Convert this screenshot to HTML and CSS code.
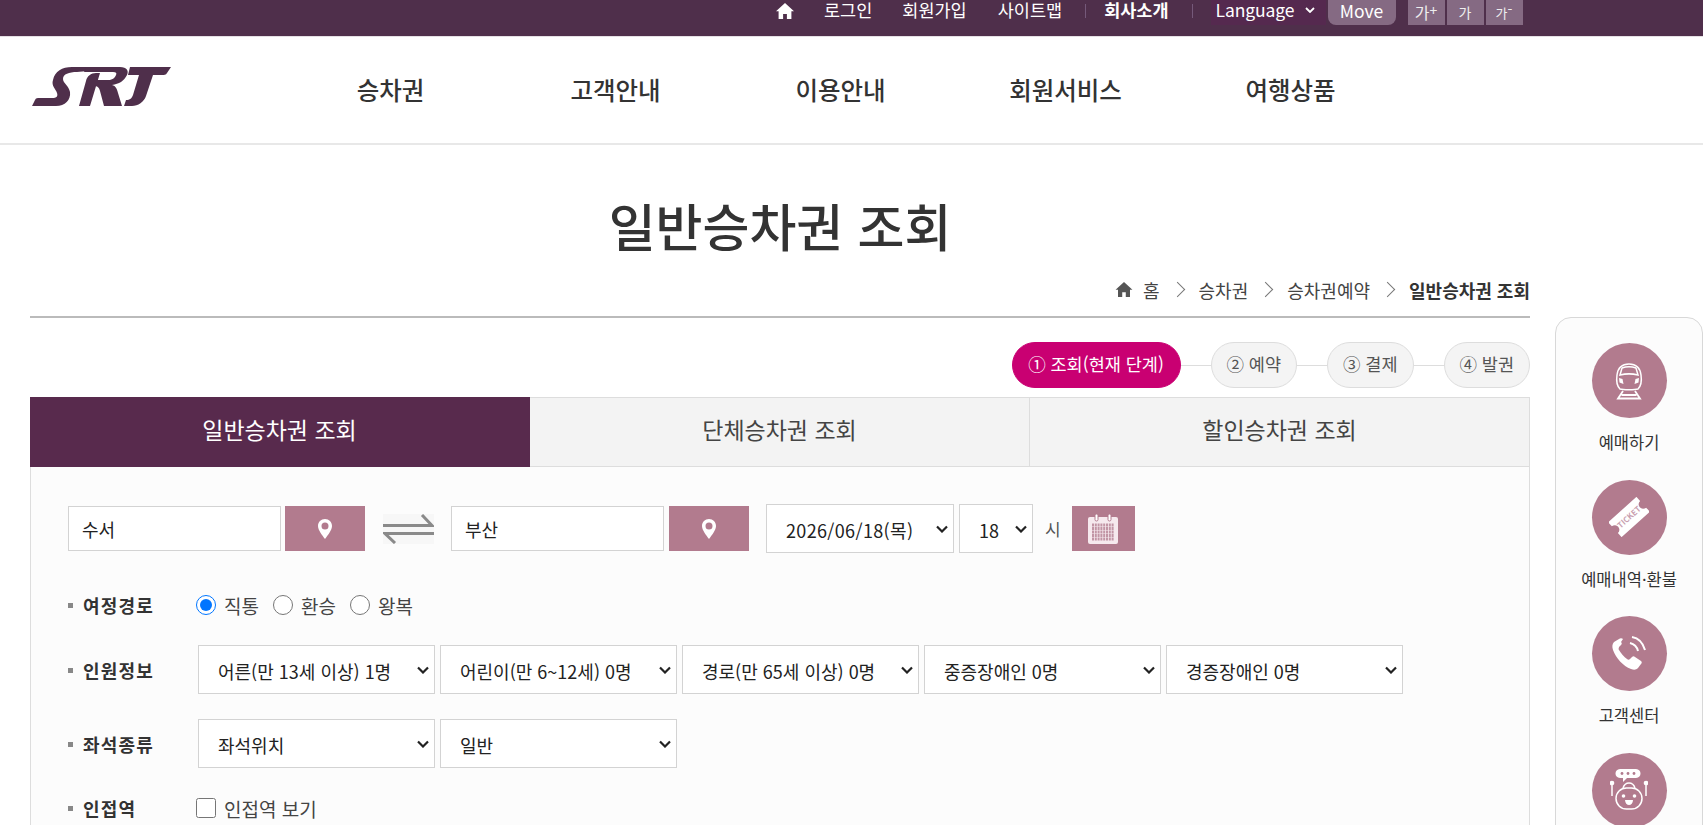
FILE: index.html
```html
<!doctype html>
<html lang="ko">
 <head>
  <meta charset="UTF-8">
  <meta name="viewport" content="width=device-width, initial-scale=1.0">
  <title>일반승차권 조회 | SRT</title>
  <link rel="stylesheet" href="styles.css">
 </head>
 <body>
  <div class="top-bar">
   <svg class="top-home" viewBox="0 0 18 16" width="18" height="16"><path fill="#fff" d="M9 0 18 8.2h-2.6V16h-4.500v-5H7.100v5H2.600V8.200H0z"/></svg>
   <a class="top-link login">로그인</a>
   <a class="top-link join">회원가입</a>
   <a class="top-link sitemap">사이트맵</a>
   <span class="top-sep"></span>
   <a class="top-link company">회사소개</a>
   <span class="top-sep sep-2"></span>
   <div class="lang">Language
    <svg viewBox="0 0 10 6" width="10" height="6"><path fill="none" stroke="#fff" stroke-width="1.800" d="M1 1l4 4 4-4"/></svg>
   </div>
   <a class="move-btn">Move</a>
   <div class="font-btns">
    <a class="font-btn">가<sup>+</sup></a>
    <a class="font-btn small">가</a>
    <a class="font-btn smaller">가<sup>-</sup></a>
   </div>
  </div>

  <div class="header">
   <svg class="logo" viewBox="0 0 139 39" width="139" height="39" role="img" aria-label="SRT">
    <path fill="#4f2f4b" d="M21 13C23 4 30 0 40 0H58L56 4 45 5C37 5 31 7 31 12 31 16 37 19 38 25 39 33 33 39 24 39H0L3 33C4 31 5 31 8 31H20C25 31 26 29 25 26 24 22 19 19 21 13Z"/>
    <path fill="#4f2f4b" d="M47 39 54 14C55 9 59 6 64 6H68L58 39ZM54 0H88C95 0 97 4 95 8 92 14 87 17 80 18 84 19 85 22 86 26L90 39H72L68 24C67 20 65 19 62 19L64 13H76C80 13 83 11 84 8 85 6 84 5 81 5H52Z"/>
    <path fill="#4f2f4b" d="M98 0H139L135 6C134 8 132 8 130 8H121L114 29C112 35 106 39 100 39H92L94 33C98 33 100 31 101 28L107 8H96Z"/>
   </svg>
   <nav class="gnb">
    <a>승차권</a>
    <a>고객안내</a>
    <a>이용안내</a>
    <a>회원서비스</a>
    <a>여행상품</a>
   </nav>
  </div>

  <div class="page">
   <main class="content">
    <h1>일반승차권 조회</h1>
    <div class="breadcrumb">
     <svg viewBox="0 0 18 16" width="18" height="15"><path fill="#555" d="M9 0 18 8.200h-2.600V16h-4.500v-5H7.100v5H2.600V8.200H0z"/></svg>
     <span>홈</span>
     <i class="crumb-arrow"></i>
     <span>승차권</span>
     <i class="crumb-arrow"></i>
     <span>승차권예약</span>
     <i class="crumb-arrow"></i>
     <strong>일반승차권 조회</strong>
    </div>

    <div class="steps">
     <span class="step current">① 조회(현재 단계)</span>
     <i class="step-line"></i>
     <span class="step">② 예약</span>
     <i class="step-line"></i>
     <span class="step">③ 결제</span>
     <i class="step-line"></i>
     <span class="step">④ 발권</span>
    </div>

    <div class="tabs">
     <a class="tab active">일반승차권 조회</a>
     <a class="tab">단체승차권 조회</a>
     <a class="tab">할인승차권 조회</a>
    </div>

    <form class="search-box">
     <div class="row-stations">
      <input class="station" type="text" value="수서">
      <button class="pin-btn" type="button">
       <svg viewBox="0 0 14 20" width="14" height="20"><path fill="#fff" fill-rule="evenodd" d="M7 0C3 0 0 3 0 7c0 4 4 9 7 13 3-4 7-9 7-13 0-4-3-7-7-7zm0 3.500a3.500 3.500 0 1 1 0 7 3.500 3.500 0 0 1 0-7z"/></svg>
      </button>
      <svg class="swap" viewBox="0 0 51 30" width="51" height="30">
       <rect width="51" height="30" fill="#f7f7f7"/>
       <path fill="none" stroke="#8a8a8a" stroke-width="3" d="M0 11.500H49L39 1M51 19.500H2L12 29"/>
      </svg>
      <input class="station" type="text" value="부산">
      <button class="pin-btn pin-2" type="button">
       <svg viewBox="0 0 14 20" width="14" height="20"><path fill="#fff" fill-rule="evenodd" d="M7 0C3 0 0 3 0 7c0 4 4 9 7 13 3-4 7-9 7-13 0-4-3-7-7-7zm0 3.500a3.500 3.500 0 1 1 0 7 3.500 3.500 0 0 1 0-7z"/></svg>
      </button>
      <select class="sel date-sel"><option>2026/06/18(목)</option></select>
      <select class="sel hour-sel"><option>18</option></select>
      <span class="hour-unit">시</span>
      <button class="cal-btn" type="button">
       <svg viewBox="0 0 30 30" width="30" height="30">
        <path fill="#f6e9ee" d="M2 3h26a2 2 0 0 1 2 2v23a2 2 0 0 1-2 2H2a2 2 0 0 1-2-2V5a2 2 0 0 1 2-2z"/>
        <rect x="7" y="0" width="3" height="7" rx="1.500" fill="#fff" stroke="#b27b8e"/>
        <rect x="20" y="0" width="3" height="7" rx="1.500" fill="#fff" stroke="#b27b8e"/>
        <path fill="none" stroke="#c295a5" stroke-width="2.800" stroke-dasharray="2 .8" d="M4 11h22M4 14.500h22M4 18h22M4 21.500h22M4 25h22"/>
       </svg>
      </button>
     </div>

     <div class="row row-route">
      <span class="row-label">여정경로</span>
      <label class="opt"><input type="radio" name="route" checked>직통</label>
      <label class="opt"><input type="radio" name="route">환승</label>
      <label class="opt"><input type="radio" name="route">왕복</label>
     </div>

     <div class="row row-sel">
      <span class="row-label">인원정보</span>
      <select class="sel"><option>어른(만 13세 이상) 1명</option></select>
      <select class="sel"><option>어린이(만 6~12세) 0명</option></select>
      <select class="sel"><option>경로(만 65세 이상) 0명</option></select>
      <select class="sel"><option>중증장애인 0명</option></select>
      <select class="sel"><option>경증장애인 0명</option></select>
     </div>

     <div class="row row-sel">
      <span class="row-label">좌석종류</span>
      <select class="sel"><option>좌석위치</option></select>
      <select class="sel"><option>일반</option></select>
     </div>

     <div class="row row-near">
      <span class="row-label">인접역</span>
      <label class="opt"><input type="checkbox">인접역 보기</label>
     </div>
    </form>
   </main>

   <aside class="quick">
    <a class="quick-item">
     <span class="quick-icon">
      <svg viewBox="0 0 30 38" width="30" height="38" fill="none" stroke="#fff" stroke-width="1.500">
       <path d="M6 27C3 24 2 20 3 13 4 5 8 2 15 2s11 3 12 11c1 7 0 11-3 14-3 1-15 1-18 0z"/>
       <path d="M8 6c4-1.500 10-1.500 14 0l2 7c-6-1.500-12-1.500-18 0z"/>
       <path fill="#fff" stroke="none" d="M5 16l3.500 1 1 5-4-1.500zM25 16l-3.500 1-1 5 4-1.500z"/>
       <path stroke-width="1.800" d="M9 29 4 36.500H26L21 29M7.500 33h15"/>
      </svg>
     </span>
     <span class="quick-label">예매하기</span>
    </a>
    <a class="quick-item">
     <span class="quick-icon">
      <svg viewBox="0 0 40 40" width="40" height="40">
       <g transform="rotate(-42 20 20)">
        <path fill="#fff" d="M1 10H39V15.500A4.500 4.500 0 0 0 39 24.500V30H1V24.500A4.500 4.500 0 0 0 1 15.500Z"/>
        <text x="20" y="23" text-anchor="middle" font-size="8" font-weight="700" fill="#c9a0b0">TICKET</text>
       </g>
      </svg>
     </span>
     <span class="quick-label">예매내역·환불</span>
    </a>
    <a class="quick-item">
     <span class="quick-icon">
      <svg viewBox="0 0 36 36" width="36" height="36"><path fill="#fff" d="M8 3 3 6C1 8 1 11 2 14c3 8 10 16 18 19 3 1 5 1 7-1l3-4c1-1 1-2 0-3l-6-4c-1-1-2-1-3 0l-2 2c-1 1-2 1-3 0-3-2-6-6-8-9-1-1 0-2 0-3l2-2c1-1 1-2 0-3L12 3c-1-1-3-1-4 0z"/><path fill="none" stroke="#fff" stroke-width="2" d="M19 7c4 1 7 4 8 8M21 1c6 1 11 6 13 13"/></svg>
     </span>
     <span class="quick-label">고객센터</span>
    </a>
    <a class="quick-item">
     <span class="quick-icon">
      <svg viewBox="0 0 38 42" width="38" height="42" fill="none" stroke="#fff" stroke-width="1.500">
       <path fill="#fff" stroke="none" d="M10 0h16c6 0 6 9 0 9H17l-4 4V9h-3C4 9 4 0 10 0z"/>
       <circle cx="12" cy="4.500" r="1.400" fill="#b27b8e" stroke="none"/><circle cx="18" cy="4.500" r="1.400" fill="#b27b8e" stroke="none"/><circle cx="24" cy="4.500" r="1.400" fill="#b27b8e" stroke="none"/>
       <rect x="6" y="19" width="26" height="21" rx="10.500"/>
       <path d="M13 19c1-3 3-5 6-5s5 2 6 5M2 15v12M36 15v12"/>
       <circle cx="2" cy="14" r="1.600" fill="#fff"/><circle cx="36" cy="14" r="1.600" fill="#fff"/>
       <circle cx="13.500" cy="27" r="1.800" fill="#fff" stroke="none"/><circle cx="24.500" cy="27" r="1.800" fill="#fff" stroke="none"/>
       <path fill="#fff" stroke="none" d="M15 31h8c0 3-2 5-4 5s-4-2-4-5z"/>
      </svg>
     </span>
    </a>
   </aside>
  </div>
 </body>
</html>
```

FILE: styles.css
```css
* {
  margin: 0;
  padding: 0;
  box-sizing: border-box;
  font-family: "Noto Sans CJK KR", "Noto Sans", sans-serif;
}

html, body {
  height: 100vh;
  overflow: hidden;
}

body {
  background: #fff;
  color: #333;
}

/* top bar */
.top-bar {
  height: 36px;
  background: #4f2f4b;
  color: #fff;
  display: flex;
  align-items: flex-start;
  padding-left: 776px;
  font-size: 17.500px;
  line-height: 20px;
}

.top-home {
  margin-top: 3px;
}

.top-link {
  white-space: nowrap;
}

.login { margin-left: 30px; }
.join { margin-left: 30px; }
.sitemap { margin-left: 31px; }
.company { font-weight: 700; }

.top-sep {
  width: 1px;
  height: 14px;
  margin: 4px 18px 0 23px;
  background: #75597a;
}

.sep-2 {
  margin: 4px 18px 0 23px;
}

.lang {
  display: flex;
  align-items: center;
  gap: 11px;
  width: 115px;
  height: 25px;
  padding: 0 0 5px 5px;
  margin-right: 2px;
  background: #55294f;
  letter-spacing: -.1px;
}

.move-btn {
  width: 68px;
  height: 25px;
  background: #856a83;
  border-radius: 0 0 8px 8px;
  text-align: center;
  line-height: 21px;
}

.font-btns {
  display: flex;
  gap: 2px;
  margin-left: 12px;
}

.font-btn {
  width: 37px;
  height: 25px;
  background: #856a83;
  text-align: center;
  font-size: 16px;
  line-height: 25px;
  color: #eee;
}

.font-btn sup {
  font-size: 14px;
  line-height: 14px;
  vertical-align: 3px;
}

.font-btn.small { font-size: 14px; }
.font-btn.smaller { font-size: 13px; }

/* header */
.header {
  height: 109px;
  border-top: 1px solid #e4dfe3;
  border-bottom: 2px solid #e8e8e8;
  padding-left: 32px;
  display: flex;
  position: relative;
}

.logo {
  margin-top: 30px;
}

.gnb {
  position: absolute;
  left: 278px;
  top: 0;
  display: flex;
}

.gnb a {
  width: 225px;
  text-align: center;
  font-size: 24.500px;
  font-weight: 500;
  line-height: 36px;
  margin-top: 35px;
  color: #333;
}

/* page */
.page {
  display: flex;
  padding-left: 30px;
  align-items: flex-start;
}

.content {
  width: 1500px;
  flex: none;
}

h1 {
  margin-top: 50px;
  text-align: center;
  font-size: 51px;
  font-weight: 500;
  line-height: 60px;
  color: #333;
}

.breadcrumb {
  margin-top: 23px;
  padding-bottom: 15px;
  border-bottom: 2px solid #bbb;
  display: flex;
  justify-content: flex-end;
  align-items: center;
  height: 40px;
  font-size: 18px;
  line-height: 24px;
  color: #444;
}

.breadcrumb svg {
  margin-right: 10px;
}

.breadcrumb strong {
  font-weight: 700;
  color: #333;
}

.crumb-arrow {
  width: 11px;
  height: 11px;
  margin: 0 16px 0 12px;
  border-top: 1px solid #777;
  border-right: 1px solid #777;
  transform: rotate(45deg);
}

/* steps */
.steps {
  margin-top: 24px;
  display: flex;
  justify-content: flex-end;
  align-items: center;
  height: 46px;
}

.step {
  width: 86.500px;
  height: 46px;
  border: 1px solid #ddd;
  border-radius: 23px;
  background: #f4f4f4;
  text-align: center;
  font-size: 17.500px;
  line-height: 42px;
  color: #555;
}

.step.current {
  width: 169px;
  border-color: #c90072;
  background: #c90072;
  color: #fff;
}

.step-line {
  width: 30px;
  height: 1px;
  background: #ddd;
}

/* tabs */
.tabs {
  margin-top: 9px;
  display: flex;
  height: 70px;
}

.tab {
  flex: 1;
  background: #f3f3f3;
  border: 1px solid #ddd;
  border-left: 0;
  text-align: center;
  font-size: 23px;
  line-height: 63px;
  color: #444;
}

.tab.active {
  background: #582a4d;
  border-color: #582a4d;
  color: #fff;
}

/* form */
.search-box {
  height: 500px;
  background: #fcfcfc;
  border: 1px solid #ddd;
  border-top: 0;
  padding: 37px 0 0 37px;
}

.row-stations {
  display: flex;
  align-items: center;
  height: 49px;
}

.station {
  width: 213px;
  height: 45px;
  border: 1px solid #d3d3d3;
  background: #fff;
  padding-left: 13px;
  font-size: 18px;
  color: #222;
}

.pin-btn {
  width: 80px;
  height: 45px;
  margin-left: 4px;
  border: 0;
  background: #b27b8e;
  display: flex;
  align-items: center;
  justify-content: center;
}

.pin-2 {
  margin-left: 5px;
}

.swap {
  margin: 0 17px 0 18px;
}

.sel {
  width: 237px;
  height: 49px;
  border: 1px solid #d3d3d3;
  border-radius: 0;
  appearance: none;
  background: #fff url("data:image/svg+xml,%3Csvg xmlns='http://www.w3.org/2000/svg' width='12' height='8' viewBox='0 0 12 8'%3E%3Cpath fill='none' stroke='%23222' stroke-width='2.200' d='M1 1.500l5 5 5-5'/%3E%3C/svg%3E") no-repeat right 5px center;
  padding: 2px 0 0 19px;
  font-size: 18px;
  color: #222;
}

.date-sel {
  width: 188px;
  margin: 0 5px 0 17px;
  letter-spacing: .35px;
}

.hour-sel {
  width: 74px;
}

.hour-unit {
  margin: 0 11px 0 12px;
  font-size: 17px;
  color: #555;
}

.cal-btn {
  width: 63px;
  height: 45px;
  border: 0;
  background: #b27b8e;
  display: flex;
  align-items: center;
  justify-content: center;
}

.row {
  display: flex;
  align-items: center;
}

.row-label {
  width: 125px;
  flex: none;
  padding-left: 15px;
  position: relative;
  font-size: 18px;
  font-weight: 700;
  letter-spacing: 1.200px;
  color: #333;
}

.row-label::before {
  content: "";
  position: absolute;
  left: 0;
  top: 50%;
  width: 5px;
  height: 5px;
  margin-top: -2px;
  background: #888;
}

.row-route {
  margin-top: 37px;
  height: 30px;
}

.row-route .row-label,
.row-near .row-label {
  width: 130px;
}

.row-sel {
  margin-top: 25px;
  gap: 5px;
}

.row-near {
  margin-top: 25px;
  height: 30px;
}

.opt {
  display: flex;
  align-items: center;
  margin-right: 16px;
  font-size: 19px;
  color: #444;
}

.opt input {
  width: 20px;
  height: 20px;
  margin: 0 8px 0 -2px;
  accent-color: #0075ff;
}

/* quick menu */
.quick {
  flex: none;
  width: 148px;
  height: 600px;
  margin: 172px 0 0 25px;
  background: #fcfcfc;
  border: 1px solid #d8d8d8;
  border-radius: 16px;
  padding-top: 25px;
  display: flex;
  flex-direction: column;
  align-items: center;
}

.quick-item {
  height: 136.500px;
  display: flex;
  flex-direction: column;
  align-items: center;
  flex: none;
}

.quick-icon {
  width: 75px;
  height: 75px;
  border-radius: 50%;
  background: #b27b8e;
  display: flex;
  align-items: center;
  justify-content: center;
}

.quick-label {
  margin-top: 12px;
  font-size: 16.500px;
  line-height: 24px;
  color: #333;
  white-space: nowrap;
}
```
